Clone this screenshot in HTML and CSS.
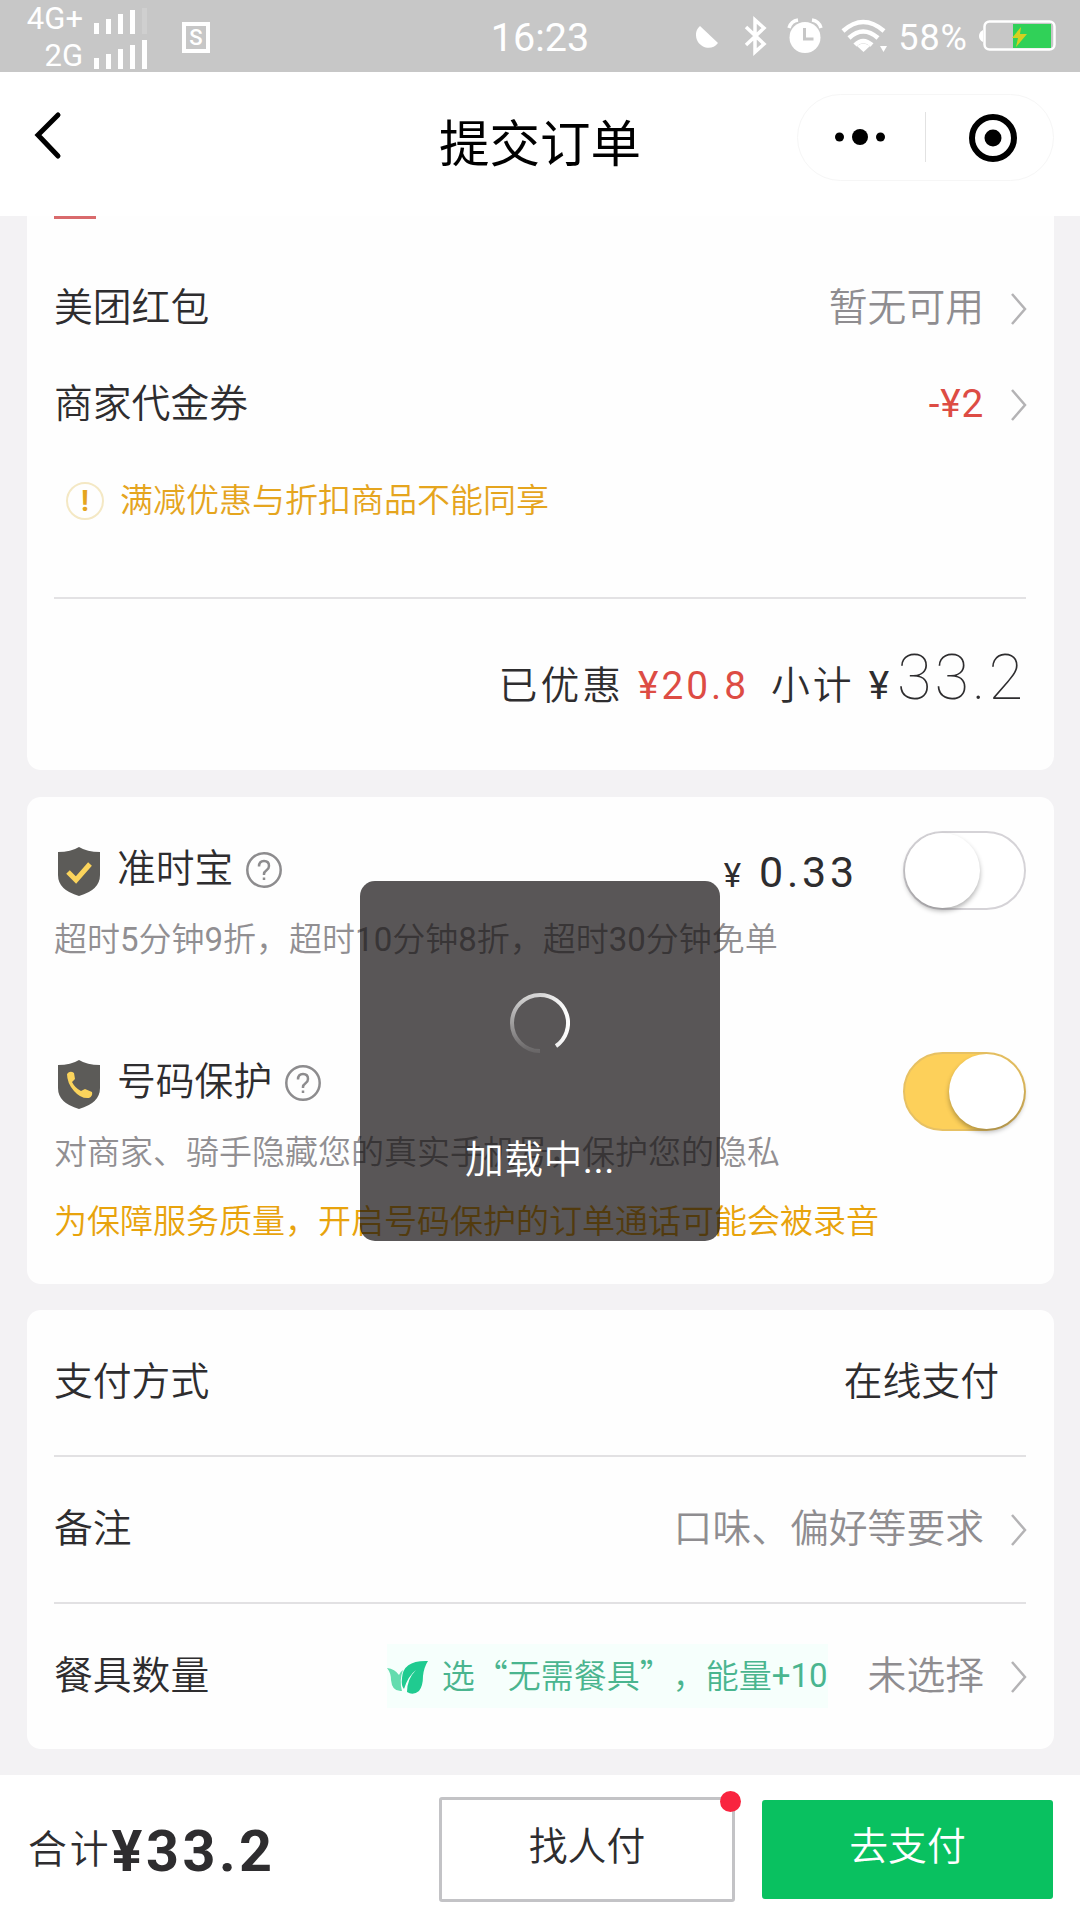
FILE: index.html
```html
<!DOCTYPE html>
<html lang="zh-CN">
<head>
<meta charset="utf-8">
<title>提交订单</title>
<link rel="stylesheet" href="styles.css">
</head>
<body>
<div class="screen">
  <div class="status">
    <div class="status-left">
      <div class="carriers">
        <span>4G+</span>
        <span>2G</span>
      </div>
      <svg class="signals" width="56" height="72" viewBox="0 0 56 72" fill="#fff">
        <path d="M1 23h5v11H1zM13 19h5v15h-5zM25 14h5v20h-5zM37 10h5v24h-5z"/>
        <path d="M49 8h5v26h-5z" opacity=".15"/>
        <path d="M1 58h5v11H1zM13 54h5v15h-5zM25 49h5v20h-5zM37 45h5v24h-5zM49 40h5v29h-5z"/>
      </svg>
      <div class="sim">S</div>
    </div>
    <div class="time">16:23</div>
    <div class="status-right">
      <svg width="23" height="23" viewBox="0 0 23 23" fill="#fff"><path d="M4 0C-1 4-1 11 2 16c4 6 14 9 20 1z"/></svg>
      <svg width="24" height="40" viewBox="0 0 24 40" fill="none" stroke="#fff" stroke-width="3.500"><path d="M2 11l18 17-9 8V4l9 8L2 29"/></svg>
      <svg width="36" height="36" viewBox="0 0 36 36"><circle cx="18" cy="19.500" r="15.500" fill="#fff"/><path d="M2 10q2-7 9-8M34 10q-2-7-9-8" stroke="#fff" stroke-width="3.500" fill="none"/><path d="M17.500 10v11h9" stroke="#c7c7c7" stroke-width="3" fill="none"/></svg>
      <svg width="46" height="34" viewBox="0 0 46 34"><g fill="none" stroke="#fff" stroke-width="4.500"><path d="M2 12q20-18 41 0M8 19q14-13 29 0M14 26q8-8 17 0"/></g><path d="M16 27q6-5 13 0l-6.500 6z" fill="#fff"/><path d="M39 27h7l-3.500 6z" fill="#fff"/></svg>
      <span class="percent">58%</span>
      <svg width="77" height="32" viewBox="0 0 77 32"><path d="M4 10v12q-4-2-4-6t4-6z" fill="#fff"/><rect x="5.500" y="1.500" width="70" height="28" rx="5" fill="none" stroke="#fff" stroke-width="2.500"/><path d="M34 4h38v24H34z" fill="#30d158"/><path d="M42 7L33 18h6l-2 9 11-13h-7z" fill="#d5d020"/></svg>
    </div>
  </div>

  <header class="navbar">
    <svg class="back" width="30" height="50" viewBox="0 0 30 50" fill="none" stroke="#000" stroke-width="5" stroke-linecap="round"><path d="M25 5L5 25l20 21"/></svg>
    <h1>提交订单</h1>
    <div class="capsule">
      <svg width="50" height="20" viewBox="0 0 50 20"><circle cx="4.500" cy="10" r="4.500"/><circle cx="25" cy="10" r="8"/><circle cx="45.500" cy="10" r="4.500"/></svg>
      <i></i>
      <svg class="close" width="48" height="50" viewBox="0 0 48 50"><circle cx="24" cy="25" r="21" fill="none" stroke="#000" stroke-width="6"/><circle cx="24" cy="25" r="8.500"/></svg>
    </div>
  </header>

  <main>
    <section class="card discounts">
      <div class="tab-line"></div>
      <div class="row"><span>美团红包</span><span class="value muted">暂无可用</span><svg class="chev" viewBox="0 0 18 34"><path d="M2 2l13 15L2 32"/></svg></div>
      <div class="row"><span>商家代金券</span><span class="value red coupon">-¥2</span><svg class="chev" viewBox="0 0 18 34"><path d="M2 2l13 15L2 32"/></svg></div>
      <div class="notice"><b>!</b><span>满减优惠与折扣商品不能同享</span></div>
      <div class="subtotal"><span>已优惠</span><span class="red saved">¥20.8</span><span class="label">小计</span><span class="yen">¥</span><span class="amount">33.2</span></div>
    </section>

    <section class="card services">
      <div class="service">
        <div class="service-head">
          <svg class="shield" viewBox="0 0 42 50"><path d="M21 0q8 5 21 5v23q0 15-21 21Q0 43 0 28V5q13 0 21-5z" fill="#5c5b58"/><path d="M10 25l8 8 14-16" fill="none" stroke="#fbd45c" stroke-width="5"/></svg>
          <span class="name">准时宝</span>
          <svg class="help" viewBox="0 0 36 36"><circle cx="18" cy="18" r="16.700"/><path d="M13 14.500q0-5.500 5-5.500t5 5q0 2.500-2.500 4.300T18 22v1"/><path d="M18 25.500v2.500"/></svg>
          <span class="price"><small>¥</small>0.33</span>
          <span class="switch"></span>
        </div>
        <p>超时5分钟9折，超时10分钟8折，超时30分钟免单</p>
      </div>
      <div class="service phone">
        <div class="service-head">
          <svg class="shield" viewBox="0 0 42 50"><path d="M21 0q8 5 21 5v23q0 15-21 21Q0 43 0 28V5q13 0 21-5z" fill="#5c5b58"/><path d="M9 14q3-4 7-1l1 6-3 3q3 6 9 9l4-2 7 3q1 4-3 6-8 1-15-7T9 14z" fill="#fbd45c"/></svg>
          <span class="name">号码保护</span>
          <svg class="help" viewBox="0 0 36 36"><circle cx="18" cy="18" r="16.700"/><path d="M13 14.500q0-5.500 5-5.500t5 5q0 2.500-2.500 4.300T18 22v1"/><path d="M18 25.500v2.500"/></svg>
          <span class="switch on"></span>
        </div>
        <p>对商家、骑手隐藏您的真实手机号，保护您的隐私</p>
        <p class="warn">为保障服务质量，开启号码保护的订单通话可能会被录音</p>
      </div>
    </section>

    <section class="card options">
      <div class="row"><span>支付方式</span><span class="value pay">在线支付</span></div>
      <div class="row"><span>备注</span><span class="value muted">口味、偏好等要求</span><svg class="chev" viewBox="0 0 18 34"><path d="M2 2l13 15L2 32"/></svg></div>
      <div class="row"><span>餐具数量</span>
        <span class="eco"><svg width="42" height="36" viewBox="0 0 42 36"><path d="M0 8q8 1 12 7 1-3 4-5-4 10-1 21Q5 32 4 20 4 13 0 8z" fill="#64dcae"/><path d="M41 1Q16 0 15 18q-1 8 2 11 4-13 12-19-9 9-9 22 6 4 12-1 4-5 4-15 1-9 5-15z" fill="#20cb90"/></svg><span class="han">选“无需餐具”</span><span class="han">，能量</span><span>+10</span></span>
        <span class="value muted">未选择</span><svg class="chev" viewBox="0 0 18 34"><path d="M2 2l13 15L2 32"/></svg></div>
    </section>
  </main>

  <footer>
    <span class="total-label">合计</span><span class="total">¥33.2</span>
    <button class="friend">找人付<i class="dot"></i></button>
    <button class="submit">去支付</button>
  </footer>

  <div class="toast">
    <svg width="60" height="60" viewBox="0 0 60 60" fill="none" stroke-width="4">
      <defs>
        <linearGradient id="tail" x1="0" y1="0" x2="0" y2="1"><stop offset="0" stop-color="#fff" stop-opacity=".75"/><stop offset="1" stop-color="#fff" stop-opacity=".1"/></linearGradient>
        <linearGradient id="head" x1="0" y1="0" x2="1" y2="0"><stop offset="0" stop-color="#fff" stop-opacity=".75"/><stop offset="1" stop-color="#fff"/></linearGradient>
      </defs>
      <path d="M30 2a28 28 0 0 0 0 56" stroke="url(#tail)"/>
      <path d="M30 2a28 28 0 0 1 16 51" stroke="url(#head)"/>
    </svg>
    <span>加载中...</span>
  </div>
</div>
</body>
</html>
```
FILE: styles.css
```css
* { box-sizing: border-box; }
body { margin: 0; background: #f3f2f4; }
svg { display: block; flex: none; }
.screen {
  position: relative;
  display: flex;
  flex-direction: column;
  width: 1080px;
  height: 1920px;
  overflow: hidden;
  font: 400 38.800px/48px Roboto, "Noto Sans CJK SC DemiLight", "Noto Sans CJK SC", sans-serif;
  color: #2e2d2f;
  white-space: nowrap;
}

/* status bar */
.status {
  display: grid;
  grid-template-columns: 1fr auto 1fr;
  align-items: center;
  height: 72px;
  background: #c7c7c7;
  color: #fff;
}
.status-left { display: flex; align-items: center; height: 72px; }
.carriers {
  display: flex;
  flex-direction: column;
  align-items: flex-end;
  width: 83px;
  padding-top: 2px;
  font-size: 31px;
  line-height: 37px;
}
.signals { margin-left: 10px; }
.sim {
  width: 28px;
  height: 31px;
  margin: 3px 0 0 33px;
  border: 4px solid #fff;
  font-size: 22px;
  font-weight: 500;
  line-height: 23px;
  text-align: center;
}
.time { font-size: 39.500px; padding-top: 4px; }
.status-right { display: flex; align-items: center; justify-content: flex-end; padding-right: 24px; }
.status-right svg:nth-of-type(1) { margin-top: 2px; }
.status-right svg:nth-of-type(2) { margin-left: 25px; }
.status-right svg:nth-of-type(3) { margin-left: 19px; }
.status-right svg:nth-of-type(4) { margin-left: 18px; }
.percent { font-size: 36px; letter-spacing: 1px; padding-top: 4px; margin: 0 11px 0 11px; }

/* title bar */
.navbar {
  display: grid;
  grid-template-columns: 1fr auto 1fr;
  align-items: center;
  height: 144px;
  flex: none;
  background: #fff;
  color: #000;
}
.back { margin: -18px 0 0 33px; }
.navbar h1 {
  margin: -9px 0 0;
  font: 400 50.500px/64px "Noto Sans CJK SC", sans-serif;
}
.capsule {
  display: flex;
  align-items: center;
  justify-self: end;
  width: 257px;
  height: 87px;
  margin: -14px 26px 0 0;
  padding-left: 37px;
  border: 1px solid #f6f6f6;
  border-radius: 44px;
}
.capsule i { width: 1px; height: 50px; margin: 0 43px 0 40px; background: #e2e2e2; }
.close { margin-top: 2px; }

/* cards */
main { flex: none; height: 1559px; padding: 0 26px 0 27px; }
.card { padding: 0 28px 0 27px; background: #fefefe; border-radius: 14px; }
.discounts { height: 554px; border-radius: 0 0 14px 14px; }
.tab-line { width: 42px; height: 3px; margin-bottom: 42px; background: #d96a6c; }
.row { display: flex; align-items: center; height: 96px; }
.row > span { margin-top: -2px; }
.value { margin-left: auto; }
.coupon { letter-spacing: .8px; }
.muted { color: #8f8d90; }
.red { color: #dd4c44; }
.chev {
  width: 18px;
  height: 34px;
  margin: 0 -2px 0 26px;
  fill: none;
  stroke: #b4b3b5;
  stroke-width: 2.500;
}
.notice {
  display: flex;
  align-items: center;
  height: 96px;
  padding-left: 12px;
  color: #e5a51e;
  font-size: 33px;
}
.notice b {
  width: 38px;
  height: 38px;
  margin-right: 16px;
  border: 2px solid #f4e8c4;
  border-radius: 50%;
  font-size: 29px;
  line-height: 34px;
  text-align: center;
}
.subtotal {
  display: flex;
  align-items: baseline;
  justify-content: flex-end;
  height: 173px;
  margin-top: 48px;
  padding-top: 46px;
  border-top: 2px solid #e3e2e4;
  letter-spacing: 3px;
  line-height: 66px;
}
.saved { margin: 0 22px 0 14px; }
.yen { margin-left: 14px; letter-spacing: 8px; }
.amount { font-size: 63px; font-weight: 100; letter-spacing: 3px; }

/* protection services */
.services { height: 487px; margin-top: 27px; }
.service { height: 213px; padding-top: 33px; }
.service-head { display: flex; align-items: center; height: 80px; }
.shield { width: 42px; height: 50px; margin: 3px 0 0 4px; }
.name { margin: -3px 0 0 17px; }
.help {
  width: 36px;
  height: 36px;
  margin-left: 13px;
  fill: none;
  stroke: #8d8c8e;
  stroke-width: 2.500;
}
.price { margin: 8px 45px 0 auto; font-size: 43px; letter-spacing: 3.800px; }
.price small { margin-right: 14px; font-size: 33px; }
.switch {
  display: flex;
  width: 123px;
  height: 79px;
  border: 2px solid #d5d3d7;
  border-radius: 40px;
  background: #fff;
}
.switch::before {
  content: "";
  width: 75px;
  height: 75px;
  border-radius: 50%;
  background: #fff;
  box-shadow: 0 3px 5px rgba(0, 0, 0, .3);
}
.switch.on { margin: 17px 0 0 auto; justify-content: flex-end; background: #fdd05a; border-color: #e7c163; }
.service p { margin: 6px 0 0; color: #918f92; font-size: 33px; line-height: 48px; }
.service p.warn { margin-top: 21px; color: #e8a30c; }

/* order options */
.options { height: 439px; margin-top: 26px; }
.options .row { height: 147px; border-bottom: 2px solid #e2e1e3; }
.options .row:last-child { border: 0; height: 145px; }
.pay { margin-right: 27px; }
.eco {
  display: flex;
  align-items: center;
  height: 64px;
  margin-left: auto;
  background: #f6fffc;
  color: #4ab58f;
  font-size: 33px;
}
.eco svg { margin: 5px 13px 0 0; }
.han { margin-top: -4px; font-family: "Noto Sans CJK SC DemiLight", "Noto Sans CJK SC", sans-serif; }
.eco + .value { margin-left: 40px; }

/* checkout bar */
footer {
  display: flex;
  align-items: center;
  flex: 1;
  padding: 4px 27px 0 28px;
  background: #fff;
}
.total-label { letter-spacing: 3px; }
.total { padding-top: 5px; font-size: 57.500px; font-weight: 700; letter-spacing: 3.500px; line-height: 60px; }
footer button {
  position: relative;
  font: inherit;
  color: inherit;
  padding: 0 0 6px;
}
.friend { width: 296px; height: 105px; margin-left: auto; border: 3px solid #c3c3c6; border-radius: 3px; background: #fff; }
.submit { width: 291px; height: 99px; margin-left: 27px; border: 0; border-radius: 3px; background: #09c160; }
footer .submit { color: #fff; }
.dot { position: absolute; top: -9px; right: -9px; width: 21px; height: 21px; border-radius: 50%; background: #f9243f; }

/* loading toast */
.toast {
  position: absolute;
  left: 360px;
  top: 881px;
  display: flex;
  flex-direction: column;
  align-items: center;
  width: 360px;
  height: 360px;
  padding-top: 112px;
  border-radius: 15px;
  background: rgba(18, 14, 16, .7);
  color: #fff;
}
.toast span { margin-top: 83px; letter-spacing: .5px; }
```
